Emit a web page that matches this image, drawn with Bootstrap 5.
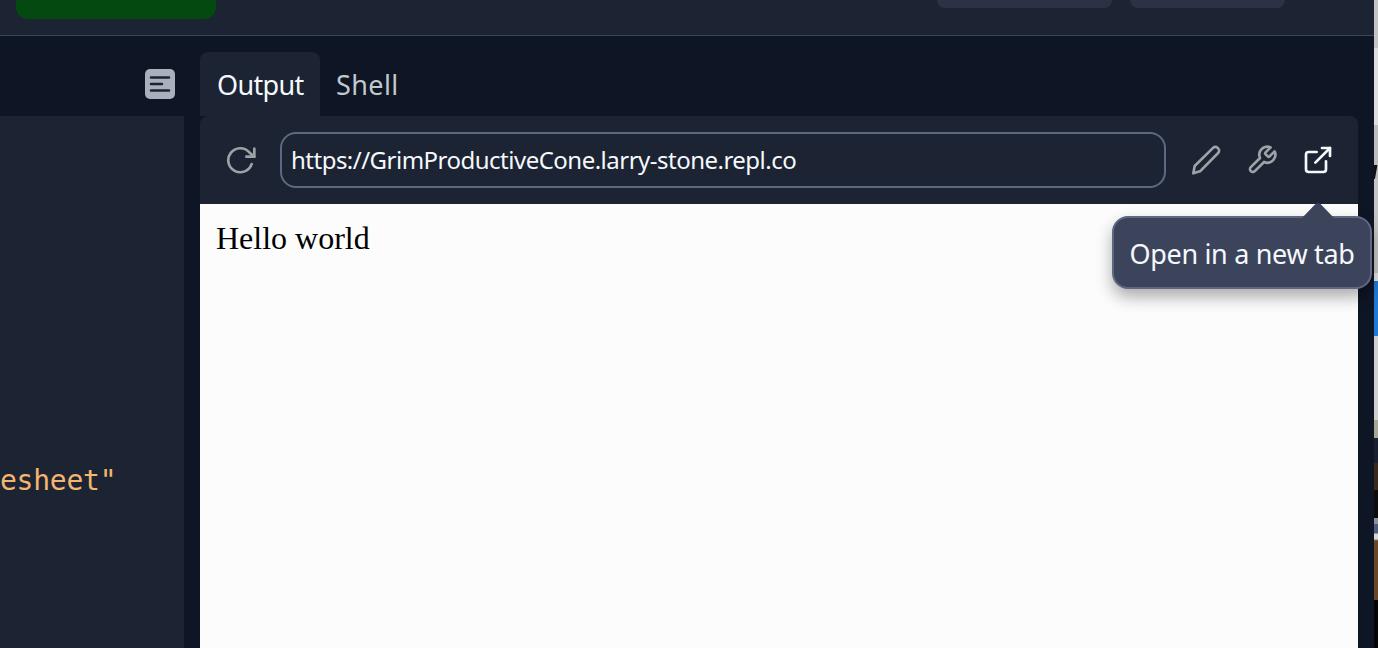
<!DOCTYPE html>
<html lang="en">
<head>
<meta charset="utf-8">
<title>Output</title>
<link href="https://cdn.jsdelivr.net/npm/bootstrap@5.3.0/dist/css/bootstrap.min.css" rel="stylesheet">
<style>
html,body{height:648px;overflow:hidden}
body{background:#0e1525;font-family:"Noto Sans","Liberation Sans",sans-serif}
.app-shell{width:1374px;height:648px;position:relative}
.top-strip{height:36px;background:#1c2333;border-bottom:1px solid #3c445c;padding:0 89px 0 16px}
.run-btn{width:200px;height:19px;background:#044a10;border-radius:0 0 12px 12px}
.ghost-a,.ghost-b{height:8px;background:#2b3245;border-radius:0 0 10px 10px}
.ghost-a{width:175px}
.ghost-b{width:155px}
.ghost-gap{gap:18px}
.left-col{width:200px}
.left-tabs{height:80px;padding:33px 25px 0 0}
.outline-btn{width:30px;height:30px;background:#aab0bb;border-radius:5px;color:#1c2333}
.editor{width:184px;height:532px;background:#1c2333;padding-top:347px;overflow:hidden}
.code-line{font:28px/36px "DejaVu Sans Mono",monospace;color:#f4b56f;white-space:nowrap;letter-spacing:-.25px}
.right-col{width:1158px}
.tab-row{height:80px;padding-top:16px}
.tab-out,.tab-shell{font-size:27px;height:64px;line-height:66px}
.tab-out{width:120px;padding:0 16px 0 17px;background:#1c2333;color:#f5f9fc;border-radius:8px 8px 0 0;letter-spacing:-.65px}
.tab-shell{color:#c2c8cc;padding:0 16px;letter-spacing:.4px}
.tool-row{height:88px;background:#1c2333;border-radius:8px 8px 0 0;padding:16px 24px 16px 25px}
.url-box{width:886px;height:56px;margin-left:23px;border:2px solid #5f6880;border-radius:16px;padding:0 9px;color:#f5f9fc;font-size:24px;line-height:52px;background:#1c2333;white-space:nowrap;letter-spacing:-.51px}
.tool-icons{margin-left:24px;gap:24px}
.tool-svg{width:32px;height:32px;flex:none;fill:none;stroke-width:2;stroke-linecap:round;stroke-linejoin:round}
.dim{stroke:#9da2a6}
.lit{stroke:#f5f9fc}
.preview{height:444px;background:#fcfcfc;color:#000;font:32px/36px "Liberation Serif",serif;padding:16px}
.tip-box{position:absolute;left:1112px;top:216px;width:260px;height:73px;background:#3c445c;border:2px solid #5f6880;border-radius:16px;color:#f5f9fc;font-size:27px;line-height:72px;text-align:center;white-space:nowrap;box-shadow:0 8px 16px rgba(2,2,3,.32);letter-spacing:-.33px}
.tip-arrow{position:absolute;left:1301px;top:202px;width:34px;height:16px;overflow:hidden}
.tip-arrow svg{display:block}
.side-strip{width:4px;height:648px;flex:none}
.s1{height:48px;background:#c4c4c4}.s2{height:77px;background:#dedede}.s3{height:40px;background:#bdbdbd}
.s4{height:14px;background:linear-gradient(100deg,#111 0 45%,#bdbdbd 60%)}.s5{height:102px;background:linear-gradient(#c4c4c4 92%,#e2e2e2 92%)}
.s6{height:55px;background:#1f7ad6}.s7{height:84px;background:#cfcfcf}.s8{height:18px;background:#a7a597}
.s9{height:210px;background:linear-gradient(#1a2030 0 12%,#3a2a1e 12% 25%,#0c0c0c 25% 38%,#8a9098 38% 41%,#4e5a78 41% 45%,#d8d8d8 46% 48%,#6a4526 49% 77%,#050505 77% 100%)}
</style>
</head>
<body>
<div class="d-flex">
  <div class="app-shell flex-shrink-0">
    <div class="top-strip d-flex justify-content-between align-items-start">
      <div class="run-btn"></div>
      <div class="d-flex ghost-gap"><div class="ghost-a"></div><div class="ghost-b"></div></div>
    </div>
    <div class="d-flex">
      <div class="left-col">
        <div class="left-tabs d-flex justify-content-end">
          <div class="outline-btn d-flex align-items-center justify-content-center">
            <svg width="22" height="18" viewBox="0 0 22 18" fill="none" stroke="currentColor" stroke-width="2.6" stroke-linecap="round"><path d="M2 2.5h18M2 9h11M2 15.5h18"/></svg>
          </div>
        </div>
        <div class="editor"><div class="code-line">esheet"</div></div>
      </div>
      <div class="right-col">
        <div class="tab-row d-flex">
          <div class="tab-out">Output</div>
          <div class="tab-shell">Shell</div>
        </div>
        <div class="tool-row d-flex align-items-center">
          <svg class="tool-svg dim" viewBox="0 0 24 24"><path d="M22 3.5v6h-6"/><path d="M20 15a9 9 0 1 1-1.9-8.9L22 9.5"/></svg>
          <div class="url-box">https://GrimProductiveCone.larry-stone.repl.co</div>
          <div class="tool-icons d-flex">
            <svg class="tool-svg dim" viewBox="0 0 24 24"><path d="M2.5 22l1-5.5L17.3 2.9a2.4 2.4 0 0 1 3.4 0l.4.4a2.4 2.4 0 0 1 0 3.4L7.5 20.5z"/></svg>
            <svg class="tool-svg dim" viewBox="0 0 24 24"><path d="M14.7 6.3a1 1 0 0 0 0 1.4l1.6 1.6a1 1 0 0 0 1.4 0l3.77-3.77a6 6 0 0 1-7.94 7.94l-6.91 6.91a2.12 2.12 0 0 1-3-3l6.91-6.91a6 6 0 0 1 7.94-7.94l-3.76 3.76z"/></svg>
            <svg class="tool-svg lit" viewBox="0 0 24 24"><path d="M18 13v6a2 2 0 0 1-2 2H5a2 2 0 0 1-2-2V8a2 2 0 0 1 2-2h6"/><path d="M15 3h6v6"/><path d="M10 14L21 3"/></svg>
          </div>
        </div>
        <div class="preview">Hello world</div>
      </div>
    </div>
    <div class="tip-box">Open in a new tab</div>
    <div class="tip-arrow"><svg width="34" height="16" viewBox="0 0 34 16"><path d="M1 16L14 2.5a4 4 0 0 1 6 0L33 16z" fill="#3c445c"/></svg></div>
  </div>
  <div class="side-strip">
    <div class="s1"></div><div class="s2"></div><div class="s3"></div><div class="s4"></div><div class="s5"></div><div class="s6"></div><div class="s7"></div><div class="s8"></div><div class="s9"></div>
  </div>
</div>
<script src="https://cdn.jsdelivr.net/npm/bootstrap@5.3.0/dist/js/bootstrap.bundle.min.js"></script>
</body>
</html>
